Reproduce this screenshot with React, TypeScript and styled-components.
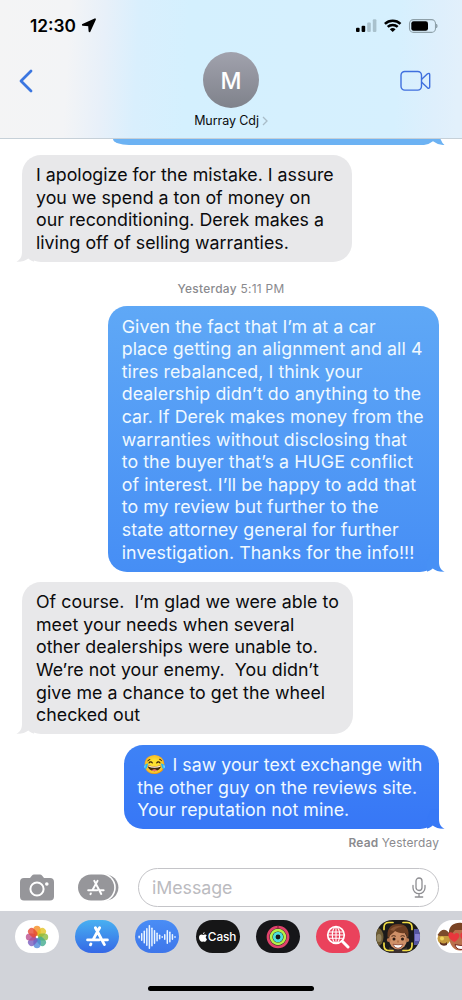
import React from "react";
import styled, { createGlobalStyle, css } from "styled-components";

const GlobalStyle = createGlobalStyle`
  * {
    box-sizing: border-box;
  }

  body {
    margin: 0;
    background: #fff;
    font-family: Inter, "Liberation Sans", sans-serif;
    color: #0b0b0d;
  }
`;

const Phone = styled.div`
  width: 462px;
  height: 1000px;
  display: flex;
  flex-direction: column;
  overflow: hidden;
  background: #fff;
`;

const Header = styled.header`
  flex: none;
  height: 139px;
  border-bottom: 1px solid #c6d0d8;
  background: linear-gradient(
    93deg,
    #f4f4f5 0,
    #f3f4f6 70px,
    #e8f0f9 105px,
    #d9effd 140px,
    #d4f0fe 190px,
    #d6f0fe 400px,
    #deeffc 440px,
    #e2f0fb 462px
  );
`;

const StatusBar = styled.div`
  height: 51px;
  padding: 0 24px 0 30px;
  display: flex;
  justify-content: space-between;
  align-items: center;
`;

const Clock = styled.div`
  display: flex;
  align-items: center;
  gap: 5px;
  font-size: 17.3px;
  line-height: 22px;
  font-weight: 600;
  color: #000;
`;

const StatusIcons = styled.div`
  display: flex;
  align-items: center;

  svg {
    display: block;
  }
`;

const NavBar = styled.div`
  height: 87px;
  padding: 1px 31px 0 18px;
  display: grid;
  grid-template-columns: 1fr auto 1fr;
  align-items: start;
`;

const NavButton = styled.button<{ $end?: boolean }>`
  height: 57px;
  padding: 0;
  border: 0;
  background: none;
  display: flex;
  align-items: center;
  justify-content: ${(props) => (props.$end ? "flex-end" : "flex-start")};
`;

const Contact = styled.div`
  display: flex;
  flex-direction: column;
  align-items: center;
  margin-left: 13px;
`;

const Avatar = styled.div`
  width: 56px;
  height: 56px;
  border-radius: 50%;
  display: flex;
  align-items: center;
  justify-content: center;
  background: linear-gradient(#a1a2ad, #7f828b);
  color: #fff;
  font-size: 23px;
  font-weight: 500;
  line-height: 1;
  padding-top: 2px;
`;

const ContactName = styled.div`
  margin-top: 5px;
  height: 16px;
  display: flex;
  align-items: center;
  gap: 3px;
  font-size: 12.5px;
  line-height: 16px;
  letter-spacing: -0.08px;
`;

const Thread = styled.main`
  flex: 1;
  display: flex;
  flex-direction: column;
`;

const PreviousBubble = styled.div`
  flex: none;
  position: relative;
  align-self: flex-end;
  width: 326px;
  height: 6px;
  margin: 0 23px 9.7px 0;
  border-bottom-left-radius: 16px 6px;
  background: #6cb2f3;
`;

const Bubble = styled.div<{ $mine?: boolean; $fill: string; $width: number; $tracking: number }>`
  flex: none;
  position: relative;
  width: ${(props) => props.$width}px;
  padding: 9.3px 0 7.5px 13.7px;
  border-radius: 19px;
  font-size: 17.8px;
  line-height: 22.6px;
  letter-spacing: ${(props) => props.$tracking}px;
  white-space: pre;
  background: ${(props) => props.$fill};
  ${(props) =>
    props.$mine
      ? css`
          align-self: flex-end;
          margin-right: 23px;
          color: #f0f9ff;
        `
      : css`
          align-self: flex-start;
          margin-left: 22.3px;
          color: #0b0b0d;
        `}

  & + & {
    margin-top: 10.3px;
  }
`;

const Line = styled.div`
  position: relative;
  height: 22.6px;
`;

const Emoji = styled.span`
  display: inline-block;
  width: 30.3px;
  padding-left: 5.5px;
  font-size: 18.5px;
  line-height: 20px;
`;

const TailSvg = styled.svg<{ $mine?: boolean }>`
  position: absolute;
  bottom: 0;
  ${(props) =>
    props.$mine
      ? css`
          right: -6px;
        `
      : css`
          left: -6px;
          transform: scaleX(-1);
        `}
`;

const Timestamp = styled.div`
  flex: none;
  height: 44.5px;
  padding-top: 19px;
  text-align: center;
  font-size: 11.9px;
  line-height: 16px;
  letter-spacing: 0.3px;
  color: #8a8a8e;

  b {
    font-weight: 500;
  }
`;

const Receipt = styled.div`
  padding: 5.5px 23px 0 0;
  text-align: right;
  font-size: 11.9px;
  line-height: 16px;
  letter-spacing: 0.16px;
  color: #8a8a8e;

  b {
    font-weight: 600;
  }
`;

const Composer = styled.div`
  flex: none;
  height: 43px;
  padding: 0 23px 4px 20px;
  display: flex;
  align-items: center;

  svg {
    display: block;
  }
`;

const AppsButton = styled.div`
  margin-left: 24px;
`;

const Field = styled.div`
  margin-left: 19px;
  flex: 1;
  height: 39px;
  padding: 0 12px 0 13px;
  border: 1px solid #c4c4c8;
  border-radius: 20px;
  display: flex;
  align-items: center;
  justify-content: space-between;
  font-size: 17.8px;
  letter-spacing: -0.05px;
  color: #bbbbbf;
`;

const AppStrip = styled.footer`
  flex: none;
  height: 89px;
  padding: 9px 0 0 15px;
  background: #d1d3d9;
`;

const AppRow = styled.div`
  display: flex;
  gap: 16.2px;
  width: 480px;
`;

const AppPill = styled.div<{ $bg: string }>`
  flex: none;
  width: 44px;
  height: 33px;
  border-radius: 16.5px;
  overflow: hidden;
  display: flex;
  align-items: center;
  justify-content: center;
  background: ${(props) => props.$bg};

  svg {
    display: block;
  }
`;

const CashLabel = styled.span`
  margin-left: 1px;
  color: #fff;
  font-size: 11.8px;
  font-weight: 500;
  letter-spacing: -0.1px;
`;

const HomeBar = styled.div`
  width: 166px;
  height: 5.5px;
  margin: 32.5px 0 0 133px;
  border-radius: 3px;
  background: #000;
`;

const apologyLines = [
  "I apologize for the mistake. I assure",
  "you we spend a ton of money on",
  "our reconditioning. Derek makes a",
  "living off of selling warranties.",
];

const complaintLines = [
  "Given the fact that I’m at a car",
  "place getting an alignment and all 4",
  "tires rebalanced, I think your",
  "dealership didn’t do anything to the",
  "car. If Derek makes money from the",
  "warranties without disclosing that",
  "to the buyer that’s a HUGE conflict",
  "of interest. I’ll be happy to add that",
  "to my review but further to the",
  "state attorney general for further",
  "investigation. Thanks for the info!!!",
];

const replyLines = [
  "Of course.  I’m glad we were able to",
  "meet your needs when several",
  "other dealerships were unable to.",
  "We’re not your enemy.  You didn’t",
  "give me a chance to get the wheel",
  "checked out",
];

const petals = ["#f58a1c", "#e3c21c", "#86b93a", "#3fa98c", "#4a86d8", "#7658bd", "#b94a8c", "#e6452f"];

const waveBars = [3, 8, 13, 18, 24, 19, 14, 9, 5, 2, 6, 14, 11, 6, 2];

type TailProps = { fill: string; mine?: boolean };

function Tail({ fill, mine }: TailProps) {
  return (
    <TailSvg $mine={mine} width="26" height="20" viewBox="0 0 26 20">
      <path d="M8 20V10L12 0h8v10c0 4.500 1.500 7.600 5.600 9.800z" fill={fill} />
      <path d="M5 20.200c3.600-.4 6.500-1.800 8.700-3.800 2.400 2 6.300 3.600 12.300 3.500v.3z" fill="#fff" />
    </TailSvg>
  );
}

type AppStoreGlyphProps = { width: number };

function AppStoreGlyph({ width }: AppStoreGlyphProps) {
  return (
    <svg
      width={width}
      height={(width * 20) / 22}
      viewBox="0 0 22 20"
      fill="none"
      stroke="#fff"
      strokeWidth="2.7"
      strokeLinecap="round"
    >
      <path d="M9 1.700 17.600 17.800M13 1.700 6.800 13M1.500 13.300H12.600M17 13.300H20.500M4.700 17.200 4.300 18" />
    </svg>
  );
}

function PhotosIcon() {
  return (
    <svg width="24" height="24" viewBox="0 0 24 24">
      {petals.map((color, i) => (
        <rect
          key={color}
          x="8.400"
          y="0.800"
          width="7.200"
          height="10.200"
          rx="3.600"
          fill={color}
          fillOpacity="0.780"
          transform={`rotate(${i * 45} 12 12)`}
        />
      ))}
      <circle cx="12" cy="12" r="1.200" fill="#fff" />
    </svg>
  );
}

function WaveIcon() {
  return (
    <svg width="38" height="26" viewBox="0 0 38 26">
      {waveBars.map((h, i) => (
        <rect key={i} x={0.4 + i * 2.56} y={13 - h / 2} width="1.500" height={h} rx="0.700" fill="#e9f4ff" />
      ))}
    </svg>
  );
}

function AppleIcon() {
  return (
    <svg width="8" height="10" viewBox="0 0 8 10" fill="#fff">
      <path d="M5.700 0Q5.600 1.800 3.900 2.200 4 .5 5.700 0zM4.100 2.900c.7 0 1.200-.5 2-.4q1.100.1 1.600.9C6.200 4.400 6.500 6.400 8 7 7.500 8.500 6.700 9.700 5.900 9.700 5.300 9.700 5 9.400 4.300 9.400S3.300 9.700 2.700 9.700C1.300 9.700 0 7.400 0 5.500 0 3.500 1.200 2.500 2.500 2.500c.7 0 1.100.4 1.600.4z" />
    </svg>
  );
}

function RingsIcon() {
  return (
    <svg width="24" height="24" viewBox="0 0 24 24" fill="none" strokeWidth="2.700">
      <circle cx="12" cy="12" r="10" stroke="#e0436c" />
      <circle cx="12" cy="12" r="6.900" stroke="#b5f04a" />
      <circle cx="12" cy="12" r="3.800" stroke="#4fe0dc" />
      <path d="M12 1v3" stroke="#8f2037" strokeWidth="1.200" />
    </svg>
  );
}

function SearchImagesIcon() {
  return (
    <svg width="24" height="24" viewBox="0 0 24 24" fill="none" stroke="#fff">
      <circle cx="10" cy="10" r="8.300" strokeWidth="1.700" />
      <ellipse cx="10" cy="10" rx="3.700" ry="8" strokeWidth="1.100" />
      <path d="M10 2v16M2.500 7h15M2 10h16M2.500 13.300h15" strokeWidth="1.100" />
      <path d="M16.300 16.300 22 22" strokeWidth="3" strokeLinecap="round" />
    </svg>
  );
}

function MemojiIcon() {
  return (
    <svg width="44" height="33" viewBox="0 0 44 33">
      <ellipse cx="2" cy="17" rx="5.500" ry="9" fill="#6d5c35" />
      <ellipse cx="3" cy="18" rx="2.500" ry="4" fill="#93845f" />
      <path d="M38 9h6v16h-6z" fill="#5555a0" />
      <path d="M39 14h5v7h-5z" fill="#8580d0" />
      <path d="M13 27q9 6 18 0v6H13z" fill="#3b3030" />
      <ellipse cx="22" cy="19.500" rx="9" ry="10" fill="#cf9068" />
      <circle cx="12.800" cy="20" r="2" fill="#b97950" />
      <circle cx="31.200" cy="20" r="2" fill="#b97950" />
      <path d="M12 19C10 10 14 4 22 4c9 0 12 6 10 15-1-3-2-5-3-6-4 1-8-1-10-2-2 3-5 3-7 8z" fill="#6b3d22" />
      <path d="M14 10c3-4 9-5 13-3-5 0-7 1-9 4z" fill="#8b5736" />
      <path d="M15.500 16.300q2.200-1.300 4.300 0M24.500 16.300q2.200-1.300 4.300 0" stroke="#4b2a1a" strokeWidth="1" fill="none" />
      <circle cx="18" cy="19" r="1.500" fill="#2c1a14" />
      <circle cx="26.500" cy="19" r="1.500" fill="#2c1a14" />
      <path d="M22 20.500v2" stroke="#a9683f" strokeWidth="1.400" />
      <path d="M17 24.300q5 1 10 0-1.500 4-5 4t-5-4z" fill="#fff" stroke="#7c3426" strokeWidth=".7" />
      <path
        d="M8 9.500V7.500Q8 2.500 13 2.500h4M27 2.500h4q5 0 5 5v2M8 23v2.500q0 5 5 5h4M27 30.500h4q5 0 5-5V23"
        fill="none"
        stroke="#f0dc45"
        strokeWidth="1.700"
        strokeLinecap="round"
      />
    </svg>
  );
}

function StickersIcon() {
  return (
    <svg width="44" height="33" viewBox="0 0 44 33">
      <circle cx="8" cy="18.500" r="6.500" fill="#c59a3e" />
      <path d="M1.500 15q6-10 12.500-1l-1 2H3z" fill="#7b4a2b" />
      <circle cx="6" cy="18.500" r="2" fill="#f1d25d" />
      <path d="M4 22q4 3 7 0v3q-4 2-7-1z" fill="#603323" />
      <ellipse cx="24" cy="18.500" rx="10.500" ry="12" fill="#b9704b" />
      <path d="M13 15C12 6 18 2 26 3c7 0 10 5 10 10l-4-3H19l-4 5z" fill="#7a4324" />
      <path d="M18.500 22c-5.500-3-6.500-5.500-6-8 1-2.500 4.500-2 5.500.500 1.500-2.500 5-2 5.500.800 0 2.500-2 4.700-5 6.700z" fill="#e8373d" />
      <path d="M30 22c-5.500-3-6-5.500-5.500-8 1-2.500 4.500-2 5.500.500 1.500-2.500 5-2 5.500.800 0 2.500-2 4.700-5.500 6.700z" fill="#e8373d" />
      <path d="M19 24.500q6 2 12 0-1 5-6 5t-6-5z" fill="#fff" stroke="#7c2e24" />
    </svg>
  );
}

function App() {
  return (
    <Phone>
      <GlobalStyle />
      <Header>
        <StatusBar>
          <Clock>
            12:30
            <svg width="16" height="15" viewBox="0 0 16 15">
              <path
                d="M14 1.300 8.500 13.300 8 7.300 1.800 6.900z"
                fill="#000"
                stroke="#000"
                strokeWidth="1.800"
                strokeLinejoin="round"
              />
            </svg>
          </Clock>
          <StatusIcons>
            <svg width="82" height="14" viewBox="0 0 82 14">
              <rect x="0" y="8.800" width="3.600" height="4.200" rx="1" fill="#000" />
              <rect x="5.600" y="6.700" width="3.600" height="6.300" rx="1" fill="#000" />
              <rect x="11.200" y="3.500" width="3.600" height="9.500" rx="1" fill="#a9c1cd" />
              <rect x="16.800" y="0.300" width="3.600" height="12.700" rx="1" fill="#a9c1cd" />
              <g transform="translate(28 0)" fill="none" stroke="#000" strokeWidth="2.500">
                <path d="M.9 4.900a11.300 11.300 0 0 1 15.600 0M3.700 7.900a7.300 7.300 0 0 1 10 0" />
                <path d="M8.700 13 5.800 10.200q2.900-2.300 5.800 0z" fill="#000" stroke="none" />
              </g>
              <rect x="53.500" y=".6" width="26" height="12.800" rx="4" fill="none" stroke="#8ea0a9" strokeWidth="1.100" />
              <rect x="55.300" y="2.300" width="16.700" height="9.400" rx="2.300" fill="#000" />
              <path d="M80.500 5q1.500 2 0 4z" fill="#8ea0a9" stroke="#8ea0a9" strokeWidth=".8" />
            </svg>
          </StatusIcons>
        </StatusBar>
        <NavBar>
          <NavButton aria-label="Back">
            <svg width="16" height="26" viewBox="0 0 16 26">
              <path
                d="M13 3 3 13l10 10"
                fill="none"
                stroke="#3b76e0"
                strokeWidth="2.800"
                strokeLinecap="round"
                strokeLinejoin="round"
              />
            </svg>
          </NavButton>
          <Contact>
            <Avatar>M</Avatar>
            <ContactName>
              Murray Cdj
              <svg width="6" height="10" viewBox="0 0 6 10">
                <path d="M1 1l4 4-4 4" fill="none" stroke="#a9bcc8" strokeWidth="1.300" />
              </svg>
            </ContactName>
          </Contact>
          <NavButton $end aria-label="Video call">
            <svg width="31" height="22" viewBox="0 0 31 22" fill="none" stroke="#3f6fde" strokeWidth="1.400" strokeLinejoin="round">
              <rect x="1" y="1.500" width="20.500" height="18.600" rx="3.800" />
              <path d="M21.700 9.300 27.500 3.800q2-1.200 2.200.8v12.400q-.2 2-2.200.8l-5.800-5.500" />
            </svg>
          </NavButton>
        </NavBar>
      </Header>

      <Thread>
        <PreviousBubble>
          <TailSvg $mine width="26" height="6" viewBox="0 0 26 6">
            <path d="M18 0h3.500q1.500 4 4 6H18z" fill="#6cb2f3" />
            <path d="M4 6.100q6-.5 10-3.800Q18 5.600 25 6.100z" fill="#fff" />
          </TailSvg>
        </PreviousBubble>
        <Bubble $fill="#e8e8ea" $width={329.7} $tracking={0.01}>
          <Tail fill="#e8e8ea" />
          {apologyLines.map((line) => (
            <Line key={line}>{line}</Line>
          ))}
        </Bubble>
        <Timestamp>
          <b>Yesterday</b> 5:11 PM
        </Timestamp>
        <Bubble $mine $fill="linear-gradient(#5fa8f6, #468ef5)" $width={331} $tracking={0.075}>
          <Tail mine fill="#4790f5" />
          {complaintLines.map((line) => (
            <Line key={line}>{line}</Line>
          ))}
        </Bubble>
        <Bubble $fill="#e8e8ea" $width={330.7} $tracking={0.035}>
          <Tail fill="#e8e8ea" />
          {replyLines.map((line) => (
            <Line key={line}>{line}</Line>
          ))}
        </Bubble>
        <Bubble $mine $fill="linear-gradient(#3e82f6, #3777f6)" $width={315.5} $tracking={0.01}>
          <Tail mine fill="#3778f6" />
          <Line>
            <Emoji>😂</Emoji> I saw your text exchange with
          </Line>
          <Line>the other guy on the reviews site.</Line>
          <Line>Your reputation not mine.</Line>
        </Bubble>
        <Receipt>
          <b>Read</b> Yesterday
        </Receipt>
      </Thread>

      <Composer>
        <svg width="34" height="27" viewBox="0 0 34 27">
          <path
            d="M4 4h6l2-2.500Q12.800.5 14 .5h6q1.200 0 2 1L24 4h6q4 0 4 4v14.500q0 4-4 4H4q-4 0-4-4V8q0-4 4-4z"
            fill="#96969a"
          />
          <circle cx="17" cy="15" r="6.600" fill="none" stroke="#fff" strokeWidth="2" />
          <circle cx="26.800" cy="10" r="1.800" fill="#fff" />
        </svg>
        <AppsButton>
          <svg width="41" height="27" viewBox="0 0 41 27">
            <rect x="4" y=".5" width="36.400" height="26" rx="13" fill="#96969a" />
            <rect x="-4" y="-1" width="41.800" height="29" rx="14.500" fill="#fff" />
            <rect x="0" y=".5" width="36.200" height="26" rx="13" fill="#96969a" />
            <g transform="translate(9 5.500) scale(.81)" fill="none" stroke="#fff" strokeWidth="2.500" strokeLinecap="round">
              <path d="M9 1.700 17.600 17.800M13 1.700 6.800 13M1.500 13.300H12.600M17 13.300H20.500M4.700 17.200 4.300 18" />
            </g>
          </svg>
        </AppsButton>
        <Field>
          iMessage
          <svg
            width="14"
            height="21"
            viewBox="0 0 14 21"
            fill="none"
            stroke="#8e8e92"
            strokeWidth="1.300"
            strokeLinecap="round"
          >
            <rect x="4" y="1" width="6" height="12.500" rx="3" />
            <path d="M1 8.500v2.200a6 6 0 0 0 12 0V8.500M7 16.700V20M3.300 20h7.400" />
          </svg>
        </Field>
      </Composer>

      <AppStrip>
        <AppRow>
          <AppPill $bg="#fff">
            <PhotosIcon />
          </AppPill>
          <AppPill $bg="linear-gradient(#48b0f1, #3568e6)">
            <AppStoreGlyph width={23} />
          </AppPill>
          <AppPill $bg="linear-gradient(#4a8df5, #3e76ea)">
            <WaveIcon />
          </AppPill>
          <AppPill $bg="#161617">
            <AppleIcon />
            <CashLabel>Cash</CashLabel>
          </AppPill>
          <AppPill $bg="#161619">
            <RingsIcon />
          </AppPill>
          <AppPill $bg="#ea425c">
            <SearchImagesIcon />
          </AppPill>
          <AppPill $bg="#1b1a1a">
            <MemojiIcon />
          </AppPill>
          <AppPill $bg="#fff">
            <StickersIcon />
          </AppPill>
        </AppRow>
        <HomeBar />
      </AppStrip>
    </Phone>
  );
}

export default App;
